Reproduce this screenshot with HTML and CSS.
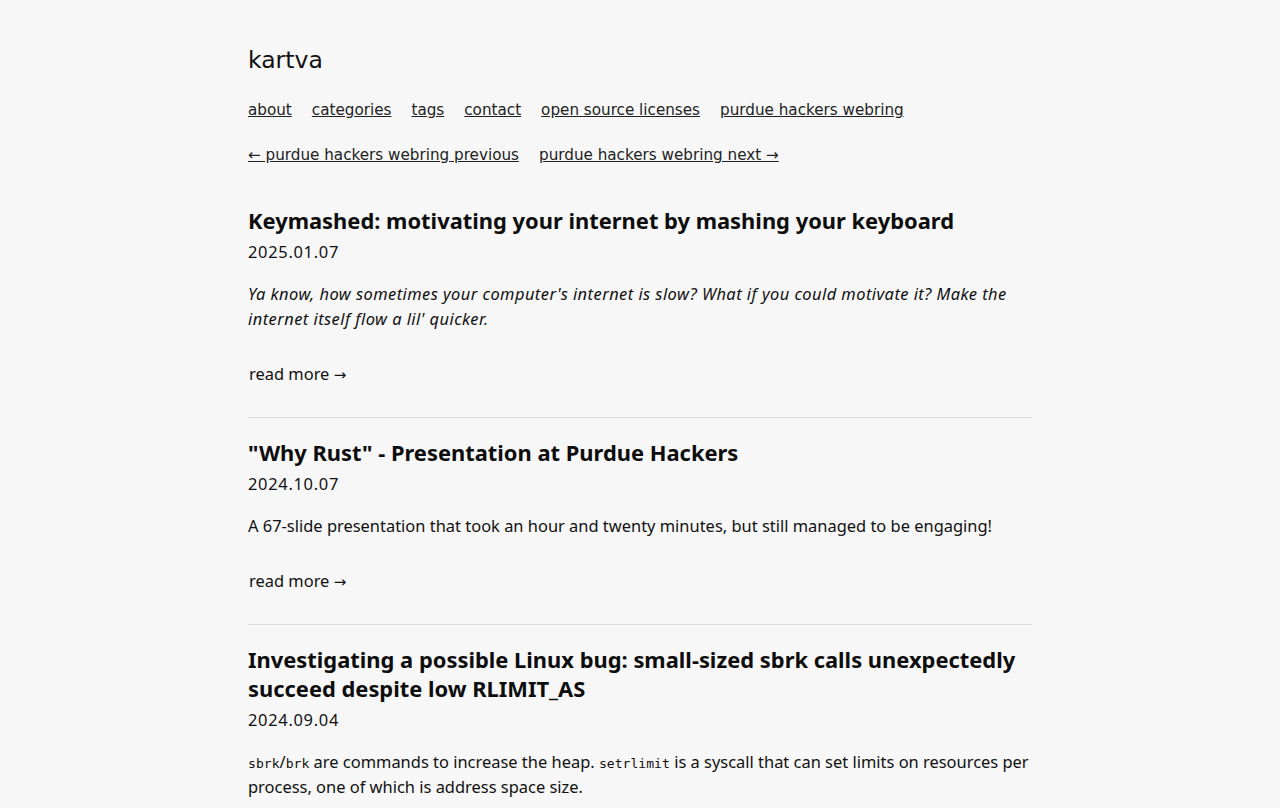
FILE: index.html
```html
<!DOCTYPE html>
<html lang="en">
<head>
<meta charset="utf-8">
<title>kartva</title>
<link rel="stylesheet" href="styles.css">
</head>
<body>
<div class="page">
  <header class="site-header">
    <div class="site-title">kartva</div>
    <nav class="nav">
      <a href="#">about</a>
      <a href="#">categories</a>
      <a href="#">tags</a>
      <a href="#">contact</a>
      <a href="#">open source licenses</a>
      <a href="#">purdue hackers webring</a>
    </nav>
    <nav class="nav webring">
      <a href="#">← purdue hackers webring previous</a>
      <a href="#">purdue hackers webring next →</a>
    </nav>
  </header>
  <main class="posts">
    <article class="post">
      <h2 class="post-title">Keymashed: motivating your internet by mashing your keyboard</h2>
      <div class="post-date">2025.01.07</div>
      <p class="post-summary"><em>Ya know, how sometimes your computer's internet is slow? What if you could motivate it? Make the internet itself flow a lil' quicker.</em></p>
      <a class="read-more" href="#">read more <span class="arrow">→</span></a>
    </article>
    <article class="post">
      <h2 class="post-title">"Why Rust" - Presentation at Purdue Hackers</h2>
      <div class="post-date">2024.10.07</div>
      <p class="post-summary">A 67-slide presentation that took an hour and twenty minutes, but still managed to be engaging!</p>
      <a class="read-more" href="#">read more <span class="arrow">→</span></a>
    </article>
    <article class="post">
      <h2 class="post-title">Investigating a possible Linux bug: small-sized sbrk calls unexpectedly succeed despite low RLIMIT_AS</h2>
      <div class="post-date">2024.09.04</div>
      <p class="post-summary"><code>sbrk</code>/<code>brk</code> are commands to increase the heap. <code>setrlimit</code> is a syscall that can set limits on resources per process, one of which is address space size.</p>
      <a class="read-more" href="#">read more <span class="arrow">→</span></a>
    </article>
  </main>
</div>
</body>
</html>
```
FILE: styles.css
```css
html, body {
  margin: 0;
  padding: 0;
  background: #f7f7f7;
  color: #111;
}
body {
  font-family: "Noto Sans", sans-serif;
  font-size: 16.45px;
  line-height: 25px;
}
.page {
  width: 784px;
  margin: 0 auto;
  padding-top: 44px;
}
.site-header {
  font-family: "DejaVu Sans", sans-serif;
}
.site-title {
  font-size: 23.5px;
  line-height: 32px;
  color: #111;
}
.nav {
  display: flex;
  gap: 20px;
  margin-top: 23px;
  font-size: 15.2px;
  line-height: 22px;
}
.nav a {
  color: #222;
  text-decoration: underline;
}
.posts {
  margin-top: 40px;
}
.post {
  border-bottom: 1px solid #ddd;
  padding-bottom: 31px;
  margin-bottom: 20px;
}
.post-title {
  margin: 0;
  font-size: 21.9px;
  line-height: 29px;
  font-weight: 700;
  color: #0d0d0d;
}
.post-date {
  margin-top: 4px;
  letter-spacing: 0.7px;
}
.post-summary {
  margin: 17px 0 30px;
}
.post-summary em {
  letter-spacing: 0.45px;
}
code {
  font-family: "DejaVu Sans Mono", monospace;
  font-size: 13.1px;
  line-height: 0;
}
.read-more {
  color: #111;
  text-decoration: none;
  padding-left: 1px;
}
.arrow {
  font-family: "DejaVu Sans", sans-serif;
  font-size: 15px;
  line-height: 0;
}
```
